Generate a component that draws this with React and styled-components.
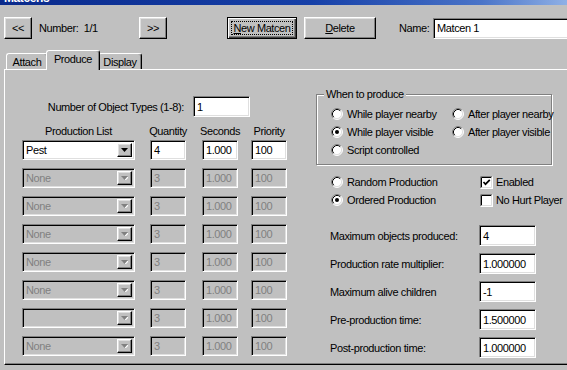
import React from "react";
import styled, { createGlobalStyle, css } from "styled-components";

const GlobalStyle = createGlobalStyle`
  html, body {
    margin: 0;
    padding: 0;
    background: #c0c0c0;
    overflow: hidden;
  }
`;

// win95 bevels
const sunken = css`
  border: 1px solid;
  border-color: #808080 #fff #fff #808080;
  box-shadow: inset 1px 1px 0 #000, inset -1px -1px 0 #dfdfdf;
`;

const raised = css`
  border: 1px solid;
  border-color: #fff #000 #000 #fff;
  box-shadow: inset -1px -1px 0 #808080, inset 1px 1px 0 #dfdfdf;
`;

const Window = styled.div`
  width: 567px;
  height: 370px;
  overflow: hidden;
  background: #c0c0c0;
  color: #000;
  font-family: "Liberation Sans", Arial, sans-serif;
  font-size: 11px;
  letter-spacing: -0.4px;
`;

const TitleBar = styled.div`
  height: 5px;
  overflow: hidden;
  display: flex;
  align-items: flex-end;
  padding-left: 4px;
  background: linear-gradient(90deg, #0a2a8c 0%, #1640a8 55%, #4a74c8 85%, #8fb0e6 100%);
  color: #fff;
  font-weight: bold;
  font-size: 12px;
  line-height: 14px;
`;

const Toolbar = styled.div`
  display: flex;
  align-items: center;
  height: 22px;
  margin-top: 12px;
  padding-left: 4px;
`;

const Button = styled.button`
  ${raised};
  box-sizing: border-box;
  height: 22px;
  width: ${(p) => p.$w}px;
  margin-left: ${(p) => p.$ml || 0}px;
  padding: 0;
  background: #c0c0c0;
  color: #000;
  font: inherit;
  letter-spacing: inherit;
  flex-shrink: 0;

  ${(p) =>
    p.$default &&
    css`
      border-color: #000;
      box-shadow: inset 1px 1px 0 #fff, inset -1px -1px 0 #404040,
        inset -2px -2px 0 #808080;
      outline: 1px dotted #000;
      outline-offset: -5px;
    `}
`;

const Mnemonic = styled.span`
  text-decoration: underline;
`;

const ToolLabel = styled.span`
  width: ${(p) => p.$w}px;
  margin-left: ${(p) => p.$ml || 0}px;
  flex-shrink: 0;
  white-space: nowrap;
`;

const Field = styled.div`
  ${sunken};
  box-sizing: border-box;
  width: ${(p) => p.$w}px;
  height: ${(p) => p.$h || 21}px;
  padding-left: 3px;
  display: flex;
  align-items: center;
  flex-shrink: 0;
  white-space: nowrap;
  overflow: hidden;
  background: ${(p) => (p.$disabled ? "#c0c0c0" : "#fff")};
  color: ${(p) => (p.$disabled ? "#808080" : "#000")};
  margin-left: ${(p) => p.$ml || 0}px;
`;

const TabStrip = styled.div`
  display: flex;
  align-items: flex-end;
  height: 20px;
  margin-top: 10px;
  padding-left: 6px;
`;

const Tab = styled.div`
  box-sizing: border-box;
  position: relative;
  width: ${(p) => p.$w}px;
  height: ${(p) => (p.$active ? 20 : 16)}px;
  margin-left: ${(p) => (p.$active ? -2 : 0)}px;
  margin-right: ${(p) => (p.$active ? -2 : 0)}px;
  margin-bottom: ${(p) => (p.$active ? -1 : 0)}px;
  z-index: ${(p) => (p.$active ? 2 : 1)};
  border: 1px solid;
  border-color: #fff #000 transparent #fff;
  border-bottom: none;
  border-radius: 3px 3px 0 0;
  box-shadow: inset -1px 0 0 #808080;
  background: #c0c0c0;
  display: flex;
  align-items: center;
  justify-content: center;
  padding-bottom: ${(p) => (p.$active ? 3 : 0)}px;
`;

const Panel = styled.div`
  box-sizing: border-box;
  margin-left: 4px;
  width: 580px;
  height: 296px;
  border-top: 1px solid #fff;
  border-left: 1px solid #fff;
  border-right: 1px solid #000;
  border-bottom: 1px solid #000;
  box-shadow: inset 0 -1px 0 #808080;
  display: flex;
  padding-left: 17px;
`;

const LeftColumn = styled.div`
  width: 265px;
  padding-top: 26px;
`;

const TypesRow = styled.div`
  display: flex;
  align-items: center;
`;

const TypesLabel = styled.span`
  width: 162px;
  text-align: right;
  white-space: nowrap;
`;

const listColumns = css`
  display: grid;
  grid-template-columns: 128px 52px 49px 36px;
`;

const HeaderRow = styled.div`
  ${listColumns};
  margin-top: 8px;
  height: 13px;
  line-height: 13px;
`;

const HeaderCell = styled.div`
  width: ${(p) => p.$w}px;
  display: flex;
  justify-content: center;
  white-space: nowrap;
`;

const ListGrid = styled.div`
  ${listColumns};
  grid-auto-rows: 20px;
  row-gap: 8px;
  margin-top: 2px;
`;

const Combo = styled.div`
  ${sunken};
  box-sizing: border-box;
  width: 113px;
  height: 20px;
  display: flex;
  align-items: stretch;
  padding: 2px 2px 2px 3px;
  background: ${(p) => (p.$disabled ? "#c0c0c0" : "#fff")};
  color: ${(p) => (p.$disabled ? "#808080" : "#000")};
`;

const ComboText = styled.span`
  flex: 1;
  display: flex;
  align-items: center;
  white-space: nowrap;
`;

const ComboButton = styled.span`
  ${raised};
  box-sizing: border-box;
  width: 15px;
  display: flex;
  align-items: center;
  justify-content: center;
  background: #c0c0c0;
`;

const RightColumn = styled.div`
  width: 236px;
  margin-left: 29px;
  padding-top: 24px;
`;

const GroupBox = styled.div`
  position: relative;
  box-sizing: border-box;
  height: 71px;
  border: 1px solid #808080;
  box-shadow: inset 1px 1px 0 #fff, 1px 1px 0 #fff;
  padding: 10px 0 0 14px;
  display: grid;
  grid-template-columns: 121px auto;
  grid-auto-rows: 18px;
`;

const GroupLabel = styled.span`
  position: absolute;
  top: -7px;
  left: 7px;
  padding: 0 2px;
  background: #c0c0c0;
  line-height: 13px;
  white-space: nowrap;
`;

const OptionGrid = styled.div`
  display: grid;
  grid-template-columns: 149px auto;
  grid-auto-rows: 18px;
  margin-top: 8px;
  padding-left: 15px;
`;

const Option = styled.label`
  display: flex;
  align-items: center;
  gap: ${(p) => p.$gap || 4}px;
  white-space: nowrap;
`;

const SettingsGrid = styled.div`
  display: grid;
  grid-template-columns: 149px 57px;
  grid-auto-rows: 21px;
  row-gap: 7px;
  margin-top: 16px;
  padding-left: 14px;
`;

const SettingLabel = styled.span`
  display: flex;
  align-items: center;
  white-space: nowrap;
`;

const Radio = ({ checked }) => (
  <svg width="12" height="12" viewBox="0 0 12 12">
    <circle cx="6" cy="6" r="5" fill="#fff" />
    <path d="M2.11 9.89 A5.5 5.5 0 0 1 9.89 2.11" fill="none" stroke="#808080" />
    <path d="M9.89 2.11 A5.5 5.5 0 0 1 2.11 9.89" fill="none" stroke="#fff" />
    <path d="M2.82 9.18 A4.5 4.5 0 0 1 9.18 2.82" fill="none" stroke="#000" />
    <path d="M9.18 2.82 A4.5 4.5 0 0 1 2.82 9.18" fill="none" stroke="#dfdfdf" />
    {checked && <circle cx="6" cy="6" r="2" fill="#000" />}
  </svg>
);

const Checkbox = ({ checked }) => (
  <svg width="13" height="13" viewBox="0 0 13 13">
    <rect x="0" y="0" width="13" height="13" fill="#fff" />
    <path d="M0.5 12.5 V0.5 H12.5" fill="none" stroke="#808080" />
    <path d="M1.5 11.5 V1.5 H11.5" fill="none" stroke="#000" />
    <path d="M0.5 12.5 H12.5 V0.5" fill="none" stroke="#fff" />
    <path d="M1.5 11.5 H11.5 V1.5" fill="none" stroke="#dfdfdf" />
    {checked && (
      <path d="M3.5 6 L5.5 8.2 L9.8 3.8" fill="none" stroke="#000" strokeWidth="1.7" />
    )}
  </svg>
);

const Arrow = ({ disabled }) => (
  <svg width="7" height="4" viewBox="0 0 7 4">
    {disabled && <path d="M1 1 H8 L4.5 4.5 Z" fill="#fff" />}
    <path d="M0 0 H7 L3.5 4 Z" fill={disabled ? "#808080" : "#000"} />
  </svg>
);

const rows = [
  { name: "Pest", qty: "4", secs: "1.000", prio: "100", enabled: true },
  { name: "None", qty: "3", secs: "1.000", prio: "100" },
  { name: "None", qty: "3", secs: "1.000", prio: "100" },
  { name: "None", qty: "3", secs: "1.000", prio: "100" },
  { name: "None", qty: "3", secs: "1.000", prio: "100" },
  { name: "None", qty: "3", secs: "1.000", prio: "100" },
  { name: "", qty: "3", secs: "1.000", prio: "100" },
  { name: "None", qty: "3", secs: "1.000", prio: "100" },
];

const settings = [
  ["Maximum objects produced:", "4"],
  ["Production rate multiplier:", "1.000000"],
  ["Maximum alive children", "-1"],
  ["Pre-production time:", "1.500000"],
  ["Post-production time:", "1.000000"],
];

export default function App() {
  return (
    <Window>
      <GlobalStyle />
      <TitleBar>Matcens</TitleBar>

      <Toolbar>
        <Button $w={28}>&lt;&lt;</Button>
        <ToolLabel $w={100} $ml={7}>Number:&nbsp; 1/1</ToolLabel>
        <Button $w={28}>&gt;&gt;</Button>
        <Button $w={70} $ml={60} $default>
          <Mnemonic>N</Mnemonic>ew Matcen
        </Button>
        <Button $w={72} $ml={7}>
          <Mnemonic>D</Mnemonic>elete
        </Button>
        <ToolLabel $w={34} $ml={23}>Name:</ToolLabel>
        <Field $w={140}>Matcen 1</Field>
      </Toolbar>

      <TabStrip>
        <Tab $w={42}>Attach</Tab>
        <Tab $w={54} $active>Produce</Tab>
        <Tab $w={44}>Display</Tab>
      </TabStrip>

      <Panel>
        <LeftColumn>
          <TypesRow>
            <TypesLabel>Number of Object Types (1-8):</TypesLabel>
            <Field $w={57} $ml={9}>1</Field>
          </TypesRow>

          <HeaderRow>
            <HeaderCell $w={113}>Production List</HeaderCell>
            <HeaderCell $w={36}>Quantity</HeaderCell>
            <HeaderCell $w={36}>Seconds</HeaderCell>
            <HeaderCell $w={36}>Priority</HeaderCell>
          </HeaderRow>

          <ListGrid>
            {rows.map((r, i) => (
              <React.Fragment key={i}>
                <Combo $disabled={!r.enabled}>
                  <ComboText>{r.name}</ComboText>
                  <ComboButton>
                    <Arrow disabled={!r.enabled} />
                  </ComboButton>
                </Combo>
                <Field $w={36} $h={20} $disabled={!r.enabled}>{r.qty}</Field>
                <Field $w={36} $h={20} $disabled={!r.enabled}>{r.secs}</Field>
                <Field $w={36} $h={20} $disabled={!r.enabled}>{r.prio}</Field>
              </React.Fragment>
            ))}
          </ListGrid>
        </LeftColumn>

        <RightColumn>
          <GroupBox>
            <GroupLabel>When to produce</GroupLabel>
            <Option><Radio />While player nearby</Option>
            <Option><Radio />After player nearby</Option>
            <Option><Radio checked />While player visible</Option>
            <Option><Radio />After player visible</Option>
            <Option><Radio />Script controlled</Option>
          </GroupBox>

          <OptionGrid>
            <Option><Radio />Random Production</Option>
            <Option $gap={3}><Checkbox checked />Enabled</Option>
            <Option><Radio checked />Ordered Production</Option>
            <Option $gap={3}><Checkbox />No Hurt Player</Option>
          </OptionGrid>

          <SettingsGrid>
            {settings.map(([label, value]) => (
              <React.Fragment key={label}>
                <SettingLabel>{label}</SettingLabel>
                <Field $w={57}>{value}</Field>
              </React.Fragment>
            ))}
          </SettingsGrid>
        </RightColumn>
      </Panel>
    </Window>
  );
}
